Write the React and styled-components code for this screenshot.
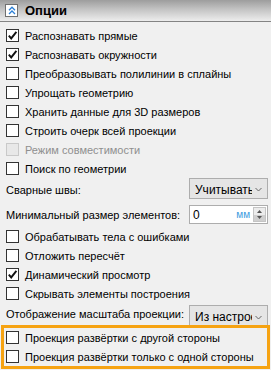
import React from "react";
import styled, { createGlobalStyle } from "styled-components";

const Global = createGlobalStyle`
  html, body { margin: 0; padding: 0; background: #f0f0f0; }
  body { font-family: "Liberation Sans", Arial, sans-serif; font-size: 11px; color: #000; }
`;

const Panel = styled.div`
  width: 271px;
  height: 370px;
  background: #f0f0f0;
  display: flex;
  flex-direction: column;
  overflow: hidden;
`;

const Header = styled.div`
  height: 21px;
  flex: none;
  display: flex;
  align-items: center;
  gap: 7px;
  padding: 0 5px;
  background: linear-gradient(#9d9d9d, #c4c4c4 45%, #ededed);
  border-bottom: 1px solid #848484;
`;

const CollapseBox = styled.span`
  width: 11px;
  height: 11px;
  background: #fff;
  border: 1px solid #707070;
  display: flex;
  align-items: center;
  justify-content: center;
`;

const Title = styled.span`
  font-weight: bold;
  font-size: 13px;
`;

const Body = styled.div`
  display: flex;
  flex-direction: column;
  padding: 4px 0 0 6px;
`;

const Row = styled.label`
  height: 19px;
  flex: none;
  display: flex;
  align-items: center;
  gap: 6px;
  color: ${(p) => (p.$disabled ? "#8f8f8f" : "#000")};
  white-space: nowrap;
`;

const Box = styled.span`
  width: 11px;
  height: 11px;
  border: 1px solid ${(p) => (p.$disabled ? "#c9c9c9" : "#333")};
  background: ${(p) => (p.$disabled ? "#e8e8e8" : "#fff")};
  display: flex;
  align-items: center;
  justify-content: center;
  flex: none;
`;

const FieldRow = styled.div`
  height: ${(p) => p.$h}px;
  flex: none;
  display: flex;
  align-items: ${(p) => p.$align || "center"};
  justify-content: space-between;
  padding-right: 3px;
  white-space: nowrap;
`;

const Label = styled.span`
  align-self: center;
`;

const Select = styled.div`
  width: 79px;
  height: ${(p) => p.$h || 21}px;
  margin-top: ${(p) => p.$mt || 0}px;
  box-sizing: border-box;
  border: 1px solid #adadad;
  background: #e5e5e5;
  display: flex;
  align-items: center;
  padding: 2px 5px 0 5px;
  gap: 3px;
  font-size: 12px;
`;

const SelectText = styled.span`
  flex: 1;
  overflow: hidden;
  white-space: nowrap;
`;

const NumberBox = styled.div`
  width: 79px;
  height: 19px;
  box-sizing: border-box;
  border: 1px solid #adadad;
  background: #fff;
  display: flex;
  align-items: center;
  padding-left: 3px;
  font-size: 12px;
`;

const NumVal = styled.span`
  flex: 1;
`;

const Unit = styled.span`
  color: #3c9be0;
  font-size: 10px;
  margin-right: 3px;
`;

const Spinner = styled.div`
  width: 13px;
  height: 15px;
  margin-right: 1px;
  display: flex;
  flex-direction: column;
  border: 1px solid #c4c4c4;
  box-sizing: border-box;
`;

const SpinHalf = styled.div`
  flex: 1;
  display: flex;
  align-items: center;
  justify-content: center;
  background: ${(p) => (p.$down ? "#cfcfcf" : "#ececec")};
`;

const Highlight = styled.div`
  margin: 0 1px 0 -5px;
  border: 3px solid #f6a312;
  padding-left: 2px;
  display: flex;
  flex-direction: column;
`;

const Check = () => (
  <svg width="11" height="11" viewBox="0 0 11 11">
    <path d="M1.8 5.6 L4.2 8.4 L9.4 1.8" fill="none" stroke="#111" strokeWidth="1.9" />
  </svg>
);

const Chev = () => (
  <svg width="7" height="5" viewBox="0 0 7 5">
    <path d="M0.5 1 L3.5 4 L6.5 1" fill="none" stroke="#666" strokeWidth="1" />
  </svg>
);

const CheckRow = ({ checked, disabled, children }) => (
  <Row $disabled={disabled}>
    <Box $disabled={disabled}>{checked && <Check />}</Box>
    {children}
  </Row>
);

export default function App() {
  return (
    <Panel>
      <Global />
      <Header>
        <CollapseBox>
          <svg width="8" height="9" viewBox="0 0 8 9">
            <path d="M1 4.2 L4 1.2 L7 4.2 M1 8 L4 5 L7 8" fill="none" stroke="#2b7fd6" strokeWidth="1.3" />
          </svg>
        </CollapseBox>
        <Title>Опции</Title>
      </Header>
      <Body>
        <CheckRow checked>Распознавать прямые</CheckRow>
        <CheckRow checked>Распознавать окружности</CheckRow>
        <CheckRow>Преобразовывать полилинии в сплайны</CheckRow>
        <CheckRow>Упрощать геометрию</CheckRow>
        <CheckRow>Хранить данные для 3D размеров</CheckRow>
        <CheckRow>Строить очерк всей проекции</CheckRow>
        <CheckRow disabled>Режим совместимости</CheckRow>
        <CheckRow>Поиск по геометрии</CheckRow>
        <FieldRow $h={24} $align="flex-start">
          <Label>Сварные швы:</Label>
          <Select>
            <SelectText>Учитывать</SelectText>
            <Chev />
          </Select>
        </FieldRow>
        <FieldRow $h={25}>
          <Label>Минимальный размер элементов:</Label>
          <NumberBox>
            <NumVal>0</NumVal>
            <Unit>мм</Unit>
            <Spinner>
              <SpinHalf>
                <svg width="5" height="3" viewBox="0 0 5 3"><path d="M0 3 L2.5 0 L5 3Z" fill="#555" /></svg>
              </SpinHalf>
              <SpinHalf $down>
                <svg width="5" height="3" viewBox="0 0 5 3"><path d="M0 0 L2.5 3 L5 0Z" fill="#555" /></svg>
              </SpinHalf>
            </Spinner>
          </NumberBox>
        </FieldRow>
        <CheckRow>Обрабатывать тела с ошибками</CheckRow>
        <CheckRow>Отложить пересчёт</CheckRow>
        <CheckRow checked>Динамический просмотр</CheckRow>
        <CheckRow>Скрывать элементы построения</CheckRow>
        <FieldRow $h={22} $align="flex-start">
          <Label>Отображение масштаба проекции:</Label>
          <Select $h={22} $mt={2}>
            <SelectText>Из настроек</SelectText>
            <Chev />
          </Select>
        </FieldRow>
        <Highlight>
          <CheckRow>Проекция развёртки с другой стороны</CheckRow>
          <CheckRow>Проекция развёртки только с одной стороны</CheckRow>
        </Highlight>
      </Body>
    </Panel>
  );
}
